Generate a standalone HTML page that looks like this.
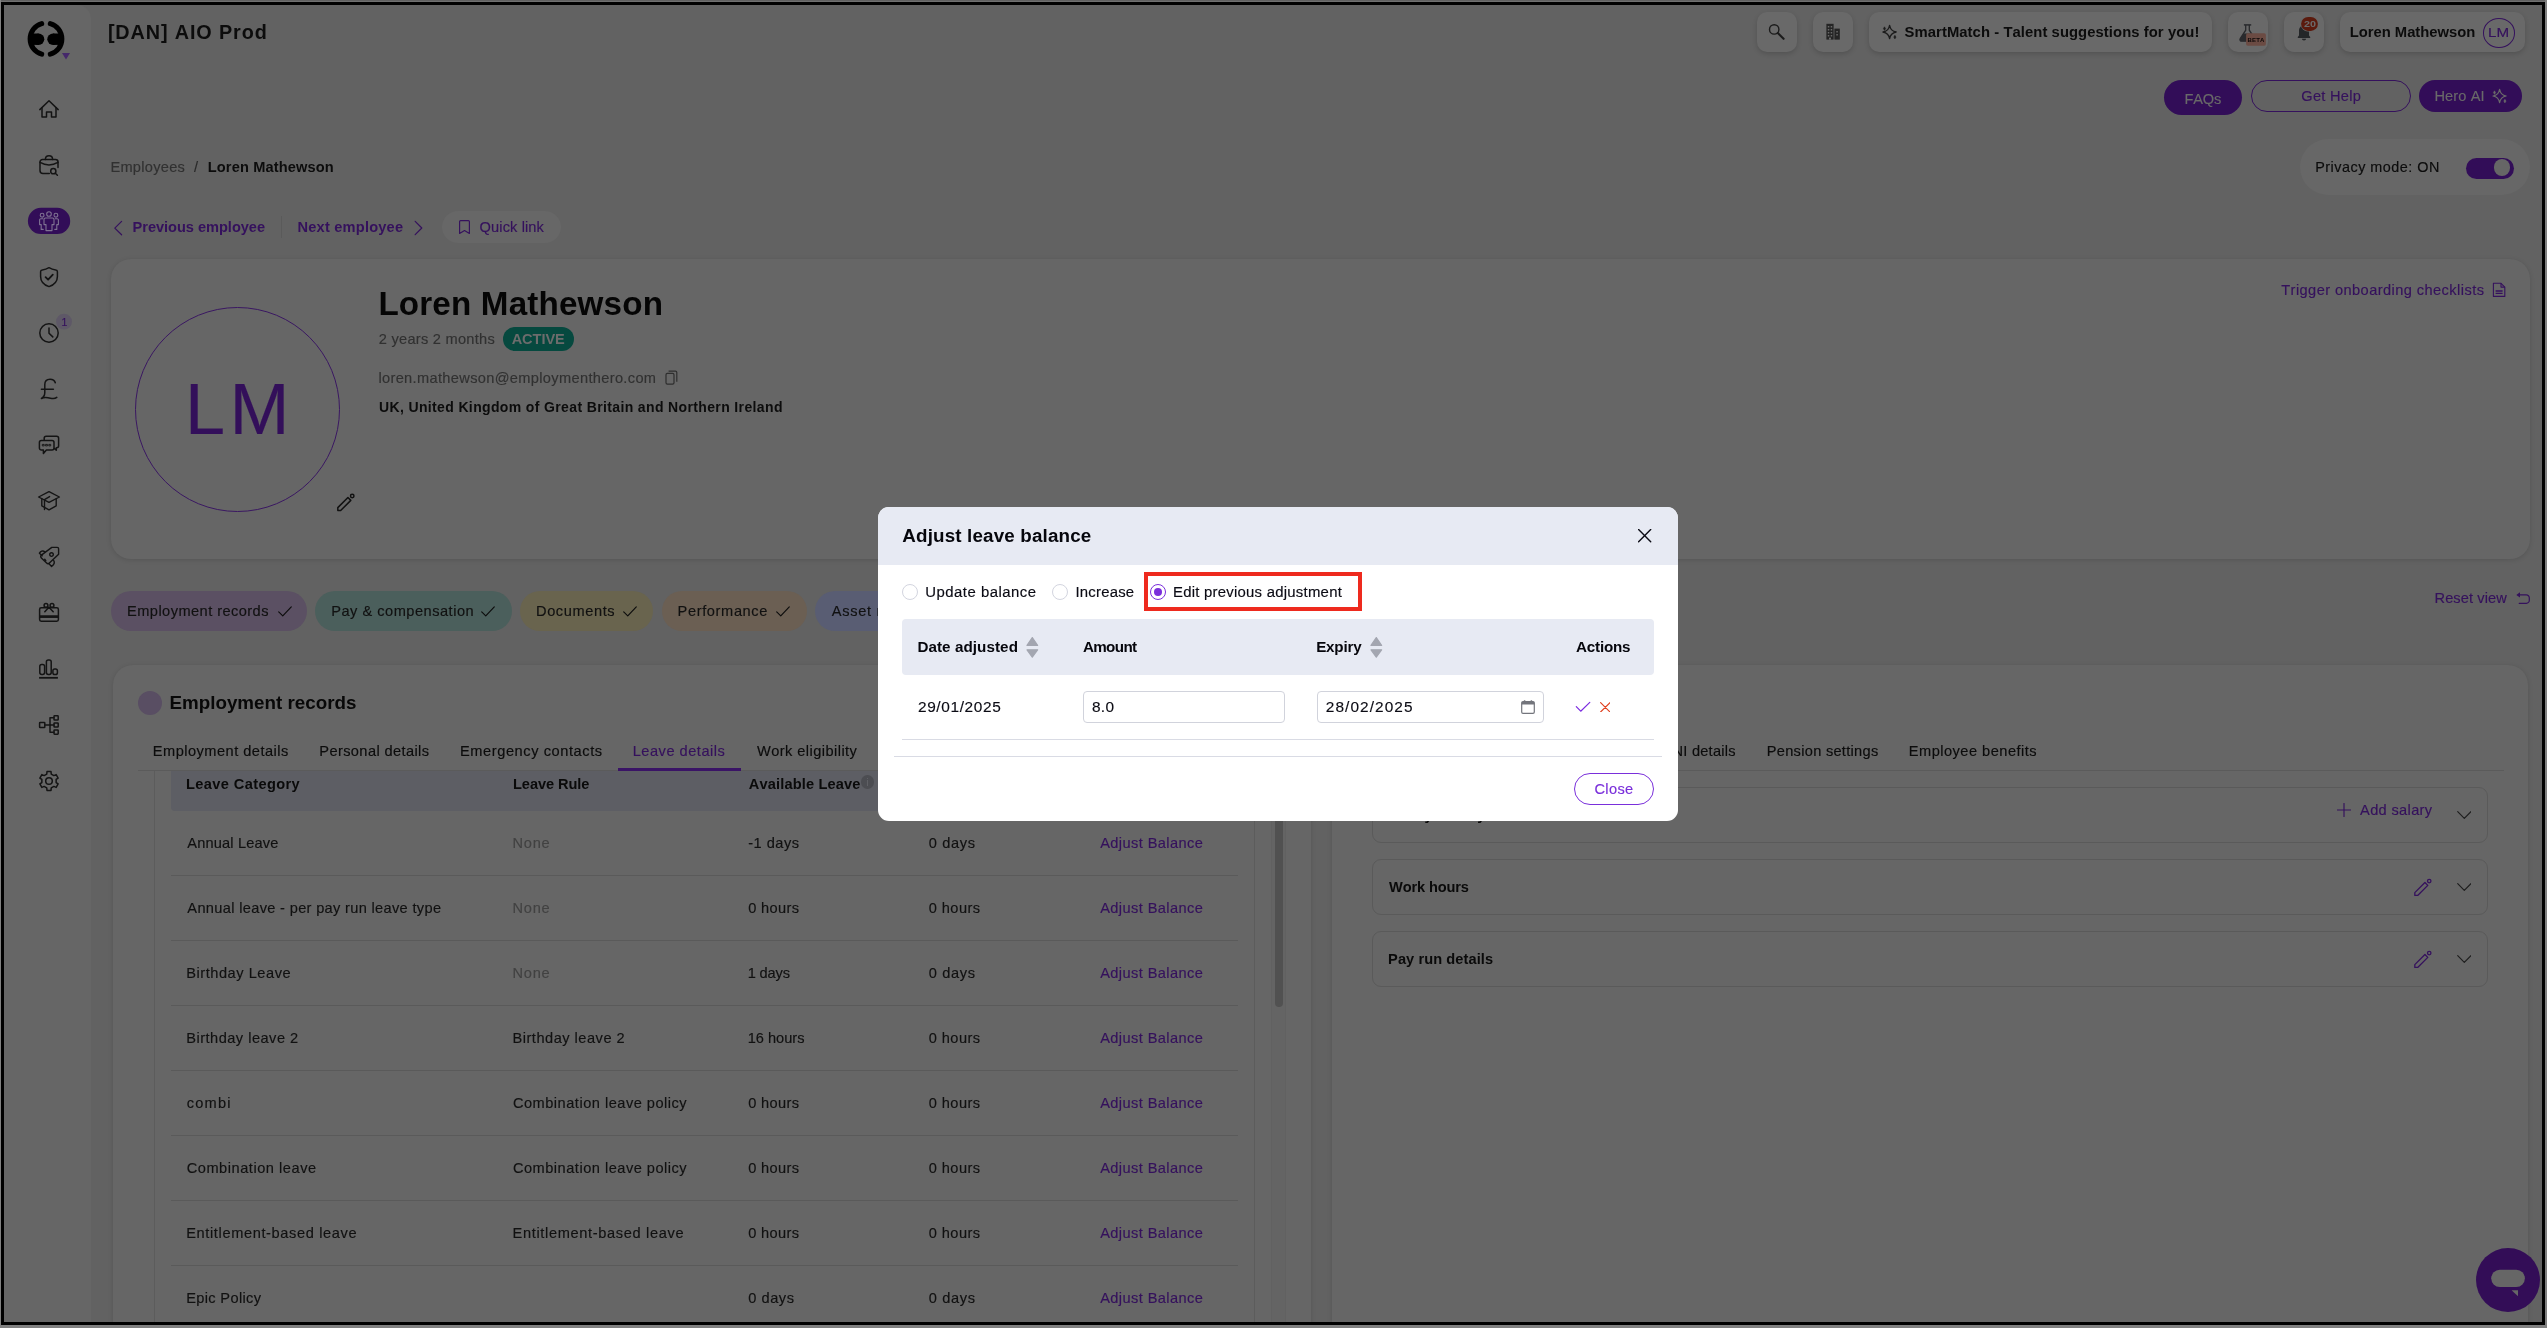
<!DOCTYPE html>
<html lang="en"><head><meta charset="utf-8"><title>Adjust leave balance</title>
<style>
html,body{margin:0;padding:0;}
body{width:2547px;height:1328px;overflow:hidden;background:#707070;font-family:"Liberation Sans",sans-serif;position:relative;}
.a{position:absolute;display:block;box-sizing:border-box;}
.t{position:absolute;white-space:nowrap;line-height:1;font-kerning:none;-webkit-text-stroke:0.15px currentColor;}
.b{-webkit-text-stroke:0;}
#page{will-change:transform;position:absolute;left:4px;top:5px;width:2538px;height:1317px;overflow:hidden;background:#626262;}
#page>.in{position:absolute;left:-4px;top:-5px;width:2547px;height:1328px;}
#frame{position:absolute;left:1px;top:2px;width:2538px;height:1317px;border:3px solid #000;}
</style></head><body>
<div id="page"><div class="in">
<div class="a" style="left:4px;top:5px;width:87px;height:1317px;background:#666666;border-radius:0 14px 0 0;"></div>
<svg class="a" style="left:20px;top:15px;" width="60" height="50" viewBox="20 15 60 50" fill="none"><g stroke="#000" stroke-width="5" stroke-linecap="round" fill="none">
<path d="M41.7 23.6A15.9 15.9 0 0 0 41.7 54.2"/><path d="M50.3 23.6A15.9 15.9 0 0 1 50.3 54.2"/></g>
<g fill="#000"><circle cx="38.6" cy="39.2" r="5.7"/><rect x="30" y="33.5" width="8.6" height="11.4"/>
<circle cx="53" cy="39.2" r="5.7"/><rect x="53" y="33.5" width="9" height="11.4"/></g>
<path d="M62 53H70L66 59.6Z" fill="#45286b"/></svg>
<svg class="a" style="left:4px;top:60px;" width="87" height="760" viewBox="4 60 87 760" fill="none"><g transform="translate(49,109)" stroke="#141414" stroke-width="1.5" stroke-linecap="round" stroke-linejoin="round" fill="none"><path d="M-9.2,0.6L0,-8.2L9.2,0.6"/><path d="M-7,-1.2V8H-2.5V3H2.5V8H7V-1.2"/></g><g transform="translate(49,165)" stroke="#141414" stroke-width="1.5" stroke-linecap="round" stroke-linejoin="round" fill="none"><path d="M0.3,8.6H-6a3,3 0 0 1 -3,-3V-3a2.5,2.5 0 0 1 2.5,-2.5H6.5a2.5,2.5 0 0 1 2.5,2.5V2.6"/><path d="M-3.6,-5.6C-3.6,-10.4 3.6,-10.4 3.6,-5.6"/><path d="M-9,-2.6Q0,2.4 9,-2.6"/><circle cx="4.3" cy="6.2" r="2.6"/><path d="M6.3,8.2L8.4,10.2"/></g><rect x="27.9" y="207.8" width="42.3" height="26.2" rx="13.1" fill="#320d58"/><g transform="translate(49,221)" stroke="#7f7292" stroke-width="1.1" stroke-linecap="round" stroke-linejoin="round" fill="none"><circle cx="0" cy="-7" r="2.3"/><path d="M-3.4,-3H3.4a1.6,1.6 0 0 1 1.6,1.6V3.6H3V9.6H-3V3.6H-5V-1.4a1.6,1.6 0 0 1 1.6,-1.6Z"/><circle cx="-6.9" cy="-5.8" r="1.9"/><circle cx="6.9" cy="-5.8" r="1.9"/><path d="M-6.2,-2.2H-8.2a1.2,1.2 0 0 0 -1.2,1.2V3.6h1.6V8.4h2"/><path d="M6.2,-2.2H8.2a1.2,1.2 0 0 1 1.2,1.2V3.6h-1.6V8.4h-2"/></g><g transform="translate(49,277)" stroke="#141414" stroke-width="1.5" stroke-linecap="round" stroke-linejoin="round" fill="none"><path d="M0,-9.3C-2.2,-8 -4.6,-7.3 -6.8,-7C-7.8,-6.9 -8.4,-6.3 -8.4,-5.3V-0.6C-8.4,4.6 -4.6,8 0,9.6C4.6,8 8.4,4.6 8.4,-0.6V-5.3C8.4,-6.3 7.8,-6.9 6.8,-7C4.6,-7.3 2.2,-8 0,-9.3Z"/><path d="M-3.4,0.2L-0.9,2.7L3.8,-2.3" stroke-width="1.8"/></g><g transform="translate(49,333)" stroke="#141414" stroke-width="1.5" stroke-linecap="round" stroke-linejoin="round" fill="none"><circle cx="0" cy="0" r="9.2"/><path d="M0,-5V0.3L3.8,3.9"/></g><circle cx="64" cy="321.7" r="7.9" fill="#5e5867"/><g transform="translate(49,389)" stroke="#141414" stroke-width="1.5" stroke-linecap="round" stroke-linejoin="round" fill="none"><path d="M6.3,-6.3C5.6,-8.8 3.4,-9.8 1,-9.8C-2.4,-9.8 -4.2,-7.6 -4.2,-4.4V3.6C-4.2,6.6 -5.4,8.3 -7.6,9.5C-4.2,7.6 -1.4,8.4 1.4,9.2C3.8,9.9 6,9.8 7.8,8.4"/><path d="M-7.6,0.2H4.4"/></g><g transform="translate(49,445)" stroke="#141414" stroke-width="1.5" stroke-linecap="round" stroke-linejoin="round" fill="none"><path d="M-4.8,-5V-6.8a2,2 0 0 1 2,-2H7.6a2,2 0 0 1 2,2V0.8a2,2 0 0 1 -2,2H7.3V5.2L5.6,3.6"/><path d="M-7.6,-4.6H3a2,2 0 0 1 2,2V3a2,2 0 0 1 -2,2H-2.6L-5.6,8.4V5H-7.6a2,2 0 0 1 -2,-2V-2.6a2,2 0 0 1 2,-2Z"/><rect x="-6.3" y="-0.6" width="1.5" height="1.5" stroke-width="0.9"/><rect x="-3.05" y="-0.6" width="1.5" height="1.5" stroke-width="0.9"/><rect x="0.2" y="-0.6" width="1.5" height="1.5" stroke-width="0.9"/></g><g transform="translate(49,501)" stroke="#141414" stroke-width="1.4" stroke-linecap="round" stroke-linejoin="round" fill="none"><path d="M0,-9.4L10.4,-4L0,1.4L-10.4,-4Z"/><path d="M-7.2,-2.2V4.8L0,8.8L7.2,4.8V-2.2"/><path d="M0.6,-4.4L-4.5,-1.4V8.6"/></g><g transform="translate(49,557)" stroke="#141414" stroke-width="1.4" stroke-linecap="round" stroke-linejoin="round" fill="none"><path d="M2.8,-9.6H8.2Q9.6,-9.6 9.6,-8.2V-2.8L0.4,6Q-1,7.4 -2.4,6L-7.6,0.9Q-9,-0.5 -7.6,-1.9Z"/><path d="M-4.2,-5.3C-6.4,-6.9 -8.4,-5.6 -9.6,-3.8L-6.8,-1.3"/><path d="M4.6,3.4C6.2,5.6 4.8,7.8 2.6,9.5L0,6.7"/><path d="M-4.3,2.3L-3.2,3.7"/><circle cx="2.5" cy="-2.4" r="1.8"/></g><g transform="translate(49,613)" stroke="#141414" stroke-width="1.5" stroke-linecap="round" stroke-linejoin="round" fill="none"><rect x="-9.4" y="-5.2" width="18.8" height="13.4" rx="1.6"/><path d="M-9.4,3.6H9.4" stroke-width="2.7" stroke-linecap="butt"/><circle cx="-3" cy="-7.6" r="1.9"/><circle cx="3" cy="-7.6" r="1.9"/><path d="M-0.1,-5.8L-4.2,-1.2M-0.1,-5.8L4.2,-1.2"/></g><g transform="translate(49,669)" stroke="#141414" stroke-width="1.5" stroke-linecap="round" stroke-linejoin="round" fill="none"><rect x="-9.2" y="-4.6" width="4.8" height="10.1" rx="1.9"/><rect x="-2.6" y="-9.1" width="4.8" height="14.6" rx="1.9"/><rect x="3.9" y="0" width="4.5" height="5.5" rx="1.8"/><path d="M-9.9,8.8H8.9" stroke-width="1.8" stroke-linecap="butt"/></g><g transform="translate(49,725)" stroke="#141414" stroke-width="1.5" stroke-linecap="round" stroke-linejoin="round" fill="none"><rect x="-9.4" y="-2.6" width="5.2" height="5.2" rx="0.6"/><path d="M-4.2,0H5M1,-7.2V7.2M1,-7.2H5M1,7.2H5"/><rect x="5" y="-9.2" width="4.2" height="4.2" rx="0.6"/><rect x="5" y="-2.1" width="4.2" height="4.2" rx="0.6"/><rect x="5" y="5" width="4.2" height="4.2" rx="0.6"/></g><g transform="translate(49,781)" stroke="#141414" stroke-width="1.5" stroke-linecap="round" stroke-linejoin="round" fill="none"><path d="M4.88,-5.42 L7.13,-6.42 L9.13,-2.97 L7.14,-1.52 L7.14,1.52 L9.13,2.97 L7.13,6.42 L4.88,5.42 L2.26,6.94 L2.00,9.39 L-2.00,9.39 L-2.26,6.94 L-4.88,5.42 L-7.13,6.42 L-9.13,2.97 L-7.14,1.52 L-7.14,-1.52 L-9.13,-2.97 L-7.13,-6.42 L-4.88,-5.42 L-2.26,-6.94 L-2.00,-9.39 L2.00,-9.39 L2.26,-6.94Z"/><circle cx="0" cy="0" r="3.3"/></g></svg><span class="t" style="left:61.60px;top:317.00px;font-size:10.5px;color:#35115d;">1</span>
<span class="t b" style="left:107.89px;top:23.00px;font-size:19.8px;color:#0c0c0c;letter-spacing:0.895px;font-weight:700;">[DAN] AIO Prod</span>
<div class="a" style="left:1757px;top:12px;width:40px;height:40px;background:#696969;border-radius:10px;box-shadow:0 2px 5px rgba(0,0,0,.16);"></div>
<div class="a" style="left:1813px;top:12px;width:40px;height:40px;background:#696969;border-radius:10px;box-shadow:0 2px 5px rgba(0,0,0,.16);"></div>
<div class="a" style="left:1869px;top:12px;width:343px;height:40px;background:#696969;border-radius:10px;box-shadow:0 2px 5px rgba(0,0,0,.16);"></div>
<div class="a" style="left:2228px;top:12px;width:40px;height:40px;background:#696969;border-radius:10px;box-shadow:0 2px 5px rgba(0,0,0,.16);"></div>
<div class="a" style="left:2284px;top:12px;width:40px;height:40px;background:#696969;border-radius:10px;box-shadow:0 2px 5px rgba(0,0,0,.16);"></div>
<div class="a" style="left:2340px;top:12px;width:185px;height:40px;background:#696969;border-radius:10px;box-shadow:0 2px 5px rgba(0,0,0,.16);"></div>
<svg class="a" style="left:1750px;top:8px;" width="790" height="112" viewBox="1750 8 790 112" fill="none"><g stroke="#1b1b1b" fill="none"><circle cx="1774.2" cy="29.4" r="4.7" stroke-width="1.4"/><path d="M1777.8,33L1783.6,38.8" stroke-width="2.1" stroke-linecap="round"/></g><g fill="#242424"><rect x="1826.4" y="23.8" width="7.2" height="15.8"/><rect x="1834.4" y="28.6" width="5.4" height="11"/></g><g fill="#696969"><rect x="1827.8" y="26" width="1.5" height="1.5"/><rect x="1827.8" y="29" width="1.5" height="1.5"/><rect x="1827.8" y="32" width="1.5" height="1.5"/><rect x="1827.8" y="35" width="1.5" height="1.5"/><rect x="1830.7" y="26" width="1.5" height="1.5"/><rect x="1830.7" y="29" width="1.5" height="1.5"/><rect x="1830.7" y="32" width="1.5" height="1.5"/><rect x="1830.7" y="35" width="1.5" height="1.5"/><rect x="1836.3" y="31" width="1.5" height="1.5"/><rect x="1836.3" y="34" width="1.5" height="1.5"/><rect x="1829" y="37.6" width="2" height="2"/></g><g transform="translate(1889.6,32) scale(1.0)"><path d="M0,-6.7C0.7,-2.5 2.3,-0.8 6.6,0C2.3,0.8 0.7,2.5 0,6.7C-0.7,2.5 -2.3,0.8 -6.6,0C-2.3,-0.8 -0.7,-2.5 0,-6.7Z" stroke="#1b1b1b" stroke-width="1.3" stroke-linejoin="round" fill="none"/><path d="M-5.1,-5.2L-4,-3.4L-5.1,-1.6L-6.2,-3.4Z M5.3,3.3L6.4,5.1L5.3,6.9L4.2,5.1Z" fill="#1b1b1b" stroke="#1b1b1b" stroke-width="0.5" stroke-linejoin="round"/></g><path d="M2243.9,24.9H2251.2" stroke="#292a2d" stroke-width="1.5"/><path d="M2245.7,25V30.2L2240.2,38.6A1.7,1.7 0 0 0 2241.7,41.2H2253.3A1.7,1.7 0 0 0 2254.8,38.6L2249.3,30.2V25" stroke="#292a2d" stroke-width="1.3" fill="none"/><path d="M2243.4,33.6H2251.6L2254.8,38.6A1.7,1.7 0 0 1 2253.3,41.2H2241.7A1.7,1.7 0 0 1 2240.2,38.6Z" fill="#292a2d"/><rect x="2246.1" y="33.3" width="19.8" height="12.4" rx="1.6" fill="#6b4b43"/><path d="M2304,25.5C2300.4,25.5 2299,28.2 2299,31.2V35.4L2297.8,37V38H2310.2V37L2309,35.4V31.2C2309,28.2 2307.6,25.5 2304,25.5Z" fill="#242628"/><path d="M2301.9,38.8H2306.1A2.1,1.7 0 0 1 2301.9,38.8Z" fill="#242628"/><rect x="2300.6" y="16.4" width="17.8" height="15" rx="7.5" fill="#6a6a6a"/><rect x="2301.1" y="16.9" width="16.8" height="14" rx="7" fill="#5b1a0d"/></svg><span class="t b" style="left:2247.60px;top:37.00px;font-size:6px;color:#0c0808;letter-spacing:0.142px;font-weight:700;">BETA</span><span class="t b" style="left:2303.53px;top:20.00px;font-size:9.3px;color:#6b6b6b;font-weight:700;transform:scaleX(1.1618);transform-origin:0 0;">20</span>
<span class="t b" style="left:1904.57px;top:25.00px;font-size:14.8px;color:#0c0c0c;letter-spacing:0.075px;font-weight:700;">SmartMatch - Talent suggestions for you!</span>
<span class="t b" style="left:2349.71px;top:25.00px;font-size:14.8px;color:#0c0c0c;letter-spacing:-0.014px;font-weight:700;">Loren Mathewson</span>
<div class="a" style="left:2483px;top:18.2px;width:32px;height:29.6px;border-radius:50%;border:1px solid #35115d;"></div>
<span class="t" style="left:2488.25px;top:27.00px;font-size:12.6px;color:#35115d;transform:scaleX(1.2050);transform-origin:0 0;">LM</span>
<div class="a" style="left:2164px;top:80px;width:78px;height:35px;background:#320d58;border-radius:17.5px;"></div>
<span class="t" style="left:2184.40px;top:92.00px;font-size:14.6px;color:#696969;letter-spacing:-0.163px;">FAQs</span>
<div class="a" style="left:2251px;top:80px;width:160px;height:32px;border-radius:16px;border:1px solid #35115d;"></div>
<span class="t" style="left:2301.27px;top:89.00px;font-size:14.6px;color:#35115d;letter-spacing:0.276px;">Get Help</span>
<div class="a" style="left:2419px;top:80px;width:103px;height:32px;background:#320d58;border-radius:16px;"></div>
<span class="t" style="left:2434.40px;top:89.00px;font-size:14.6px;color:#696969;letter-spacing:0.125px;">Hero AI</span>
<svg class="a" style="left:2490px;top:86px;" width="20" height="20" viewBox="2490 86 20 20" fill="none"><g transform="translate(2499.6,96) scale(1.0)"><path d="M0,-6.7C0.7,-2.5 2.3,-0.8 6.6,0C2.3,0.8 0.7,2.5 0,6.7C-0.7,2.5 -2.3,0.8 -6.6,0C-2.3,-0.8 -0.7,-2.5 0,-6.7Z" stroke="#6a6a6a" stroke-width="1.2" stroke-linejoin="round" fill="none"/><path d="M-5.1,-5.2L-4,-3.4L-5.1,-1.6L-6.2,-3.4Z M5.3,3.3L6.4,5.1L5.3,6.9L4.2,5.1Z" fill="#6a6a6a" stroke="#6a6a6a" stroke-width="0.5" stroke-linejoin="round"/></g></svg>
<div class="a" style="left:2300px;top:139px;width:230px;height:56px;background:#676767;border-radius:28px;"></div>
<span class="t" style="left:2315.22px;top:160.00px;font-size:14.4px;color:#0c0c0c;letter-spacing:0.495px;">Privacy mode: ON</span>
<div class="a" style="left:2466px;top:157.6px;width:48.2px;height:21.4px;background:#320d58;border-radius:10.7px;"></div>
<div class="a" style="left:2493.9px;top:159.2px;width:16.4px;height:16.4px;background:#666666;border-radius:8.2px;"></div>
<span class="t" style="left:110.40px;top:160.00px;font-size:14.6px;color:#313131;letter-spacing:0.288px;">Employees</span>
<span class="t" style="left:194.00px;top:160.00px;font-size:14.6px;color:#2a2a2a;">/</span>
<span class="t b" style="left:207.72px;top:160.00px;font-size:14.6px;color:#0c0c0c;letter-spacing:0.141px;font-weight:700;">Loren Mathewson</span>
<span class="t b" style="left:132.62px;top:220.00px;font-size:14.6px;color:#35115d;letter-spacing:-0.038px;font-weight:700;">Previous employee</span>
<div class="a" style="left:281px;top:216px;width:1px;height:22px;background:#5a5a5a;"></div>
<span class="t b" style="left:297.52px;top:220.00px;font-size:14.6px;color:#35115d;letter-spacing:0.210px;font-weight:700;">Next employee</span>
<div class="a" style="left:442px;top:211px;width:118.8px;height:32.2px;background:#676767;border-radius:16.1px;"></div>
<span class="t" style="left:479.61px;top:220.00px;font-size:14.6px;color:#35115d;letter-spacing:0.110px;">Quick link</span>
<svg class="a" style="left:110px;top:215px;" width="370" height="26" viewBox="110 215 370 26" fill="none"><g stroke="#35115d" stroke-width="1.2" stroke-linecap="round" stroke-linejoin="round" fill="none"><path d="M121.6,221.4L114.8,228.1L121.6,234.8"/><path d="M415.2,221.3L421.8,228L415.2,234.7"/><path d="M460.6,220.6H468.4Q469.4,220.6 469.4,221.6V233.5L464.5,230.6L459.6,233.5V221.6Q459.6,220.6 460.6,220.6Z" stroke-width="1.15"/></g></svg>
<div class="a" style="left:111px;top:259px;width:2419px;height:300.3px;background:#666666;border-radius:20px;box-shadow:0 1px 5px rgba(0,0,0,.13);"></div>
<div class="a" style="left:134.5px;top:306.5px;width:205px;height:205px;border-radius:50%;border:1px solid #3a1762;"></div>
<span class="t" style="left:185.09px;top:373.00px;font-size:72px;color:#330f5a;letter-spacing:4.493px;">LM</span>
<span class="t b" style="left:378.38px;top:287.00px;font-size:33.2px;color:#050505;letter-spacing:0.176px;font-weight:700;">Loren Mathewson</span>
<span class="t" style="left:378.77px;top:332.00px;font-size:14.6px;color:#313131;letter-spacing:0.265px;">2 years 2 months</span>
<div class="a" style="left:503px;top:327px;width:71px;height:24px;background:#06493f;border-radius:12px;"></div>
<span class="t b" style="left:511.64px;top:332.00px;font-size:14.6px;color:#6c6c6c;letter-spacing:-0.061px;font-weight:700;">ACTIVE</span>
<span class="t" style="left:378.42px;top:371.00px;font-size:14.6px;color:#313131;letter-spacing:0.344px;">loren.mathewson@employmenthero.com</span>
<span class="t b" style="left:378.96px;top:400.00px;font-size:14px;color:#0c0c0c;letter-spacing:0.364px;font-weight:700;">UK, United Kingdom of Great Britain and Northern Ireland</span>
<span class="t" style="left:2281.27px;top:283.00px;font-size:14.6px;color:#35115d;letter-spacing:0.430px;">Trigger onboarding checklists</span>
<svg class="a" style="left:336.5px;top:493.4px;" width="18.4" height="18.4" viewBox="0 0 18 18" fill="none"><g stroke="#111" stroke-width="1.4673913043478262" stroke-linecap="round" stroke-linejoin="round" fill="none"><path d="M0.8,17.1V14.3L10.7,4.4L13.5,7.2L3.6,17.1Z"/><circle cx="14.9" cy="3" r="1.7"/></g></svg><svg class="a" style="left:664px;top:369px;" width="16" height="18" viewBox="664 369 16 18" fill="none"><g stroke="#2e2e2e" stroke-width="1.2" fill="none" stroke-linejoin="round"><rect x="666" y="373.4" width="8" height="10.8" rx="1.4"/><path d="M668.6,371.2H675.4a1.4,1.4 0 0 1 1.4,1.4V381.8"/></g></svg><svg class="a" style="left:2490px;top:280px;" width="18" height="20" viewBox="2490 280 18 20" fill="none"><g stroke="#35115d" stroke-width="1.1" fill="none" stroke-linejoin="round"><path d="M2493.4,283.3H2501L2504.8,287.1V296.4H2493.4Z"/><path d="M2501,283.3V287.1H2504.8"/><path d="M2495.6,291H2502.6M2495.6,293.4H2502.6" stroke-width="1.3"/></g></svg>
<div class="a" style="left:111px;top:591px;width:196px;height:40px;background:#5b5063;border-radius:20px;"></div>
<span class="t" style="left:127.10px;top:604.00px;font-size:14.6px;color:#111111;letter-spacing:0.444px;">Employment records</span>
<svg class="a" style="left:277.5px;top:606px;" width="14" height="10.64" viewBox="0 0 14 10.64" fill="none"><path d="M0.7,5.96L4.76,9.84L13.30,0.8" stroke="#0c0c0c" stroke-width="1.15" stroke-linecap="round" stroke-linejoin="round"/></svg>
<div class="a" style="left:315px;top:591px;width:197px;height:40px;background:#4b5f5c;border-radius:20px;"></div>
<span class="t" style="left:331.20px;top:604.00px;font-size:14.6px;color:#111111;letter-spacing:0.508px;">Pay &amp; compensation</span>
<svg class="a" style="left:481.3px;top:606px;" width="14" height="10.64" viewBox="0 0 14 10.64" fill="none"><path d="M0.7,5.96L4.76,9.84L13.30,0.8" stroke="#0c0c0c" stroke-width="1.15" stroke-linecap="round" stroke-linejoin="round"/></svg>
<div class="a" style="left:520.2px;top:591px;width:133.2px;height:40px;background:#69644e;border-radius:20px;"></div>
<span class="t" style="left:536.00px;top:604.00px;font-size:14.6px;color:#111111;letter-spacing:0.598px;">Documents</span>
<svg class="a" style="left:622.5px;top:606px;" width="14" height="10.64" viewBox="0 0 14 10.64" fill="none"><path d="M0.7,5.96L4.76,9.84L13.30,0.8" stroke="#0c0c0c" stroke-width="1.15" stroke-linecap="round" stroke-linejoin="round"/></svg>
<div class="a" style="left:662.2px;top:591px;width:144.5px;height:40px;background:#6b5f53;border-radius:20px;"></div>
<span class="t" style="left:677.60px;top:604.00px;font-size:14.6px;color:#111111;letter-spacing:0.627px;">Performance</span>
<svg class="a" style="left:775.5px;top:606px;" width="14" height="10.64" viewBox="0 0 14 10.64" fill="none"><path d="M0.7,5.96L4.76,9.84L13.30,0.8" stroke="#0c0c0c" stroke-width="1.15" stroke-linecap="round" stroke-linejoin="round"/></svg>
<div class="a" style="left:815px;top:591px;width:195px;height:40px;background:#595d73;border-radius:20px;"></div>
<span class="t" style="left:831.77px;top:604.00px;font-size:14.6px;color:#111111;letter-spacing:0.709px;">Asset register</span>
<svg class="a" style="left:940px;top:606px;" width="14" height="10.64" viewBox="0 0 14 10.64" fill="none"><path d="M0.7,5.96L4.76,9.84L13.30,0.8" stroke="#0c0c0c" stroke-width="1.15" stroke-linecap="round" stroke-linejoin="round"/></svg>
<span class="t" style="left:2434.50px;top:591.00px;font-size:14.6px;color:#35115d;letter-spacing:0.095px;">Reset view</span>
<svg class="a" style="left:2514px;top:589px;" width="20" height="18" viewBox="2514 589 20 18" fill="none"><path d="M2518.6,594.9H2526.4A2.9,2.9 0 0 1 2529.3,597.8V600.4A2.9,2.9 0 0 1 2526.4,603.3H2519.2" stroke="#35115d" stroke-width="1.2" stroke-linecap="round" fill="none"/><path d="M2516.3,594.9L2520,592.2V597.6Z" fill="#35115d"/></svg>
<div class="a" style="left:113px;top:665px;width:1197.5px;height:735px;background:#666666;border-radius:20px;box-shadow:0 1px 5px rgba(0,0,0,.13);"></div>
<div class="a" style="left:137.9px;top:691px;width:24.1px;height:24px;background:#594e63;border-radius:12px;"></div>
<span class="t b" style="left:169.54px;top:694.00px;font-size:18.8px;color:#080808;font-weight:700;">Employment records</span>
<span class="t" style="left:152.80px;top:744.00px;font-size:14.6px;color:#0c0c0c;letter-spacing:0.478px;">Employment details</span>
<span class="t" style="left:319.30px;top:744.00px;font-size:14.6px;color:#0c0c0c;letter-spacing:0.390px;">Personal details</span>
<span class="t" style="left:460.00px;top:744.00px;font-size:14.6px;color:#0c0c0c;letter-spacing:0.580px;">Emergency contacts</span>
<span class="t" style="left:632.70px;top:744.00px;font-size:14.6px;color:#35115d;letter-spacing:0.516px;">Leave details</span>
<span class="t" style="left:756.94px;top:744.00px;font-size:14.6px;color:#0c0c0c;letter-spacing:0.446px;">Work eligibility</span>
<div class="a" style="left:137.8px;top:770px;width:1152.2px;height:1px;background:#5b5b5b;"></div>
<div class="a" style="left:618.2px;top:768px;width:122.5px;height:2.7px;background:#3a1466;"></div>
<div class="a" style="left:154px;top:771px;width:1px;height:559px;background:#5c5c5c;"></div>
<div class="a" style="left:1254px;top:771px;width:1px;height:559px;background:#5c5c5c;"></div>
<div class="a" style="left:1271.4px;top:771px;width:14.3px;height:559px;background:#646464;border-left:1px solid #616161;border-right:1px solid #616161;box-sizing:border-box;"></div>
<div class="a" style="left:1275.4px;top:780px;width:7.8px;height:226.5px;background:#515151;border-radius:4px;"></div>
<div class="a" style="left:171.1px;top:771px;width:1082.9px;height:39.8px;background:#5d5e64;border-radius:0 0 0 4px;"></div>
<span class="t b" style="left:186.02px;top:777.00px;font-size:14.6px;color:#0a0a0a;letter-spacing:0.386px;font-weight:700;">Leave Category</span>
<span class="t b" style="left:513.02px;top:777.00px;font-size:14.6px;color:#0a0a0a;letter-spacing:-0.068px;font-weight:700;">Leave Rule</span>
<span class="t b" style="left:748.84px;top:777.00px;font-size:14.6px;color:#0a0a0a;letter-spacing:0.150px;font-weight:700;">Available Leave</span>
<div class="a" style="left:860.9px;top:775.1px;width:13.6px;height:13.6px;background:#4c4d52;border-radius:7px;"></div>
<div class="a" style="left:867.2px;top:777.6px;width:1px;height:1.4px;background:#5f6065;"></div>
<div class="a" style="left:867.2px;top:780.4px;width:1px;height:5.8px;background:#5f6065;"></div>
<span class="t" style="left:187.37px;top:836.00px;font-size:14.6px;color:#111111;letter-spacing:0.153px;">Annual Leave</span>
<span class="t" style="left:512.50px;top:836.00px;font-size:14.6px;color:#424242;letter-spacing:0.748px;">None</span>
<span class="t" style="left:748.15px;top:836.00px;font-size:14.6px;color:#111111;letter-spacing:0.500px;">-1 days</span>
<span class="t" style="left:928.83px;top:836.00px;font-size:14.6px;color:#111111;letter-spacing:0.636px;">0 days</span>
<span class="t" style="left:1100.17px;top:836.00px;font-size:14.6px;color:#35115d;letter-spacing:0.414px;">Adjust Balance</span>
<div class="a" style="left:171.3px;top:875px;width:1066.4px;height:1px;background:#5a5a5a;"></div>
<span class="t" style="left:187.37px;top:901.00px;font-size:14.6px;color:#111111;letter-spacing:0.331px;">Annual leave - per pay run leave type</span>
<span class="t" style="left:512.50px;top:901.00px;font-size:14.6px;color:#424242;letter-spacing:0.748px;">None</span>
<span class="t" style="left:748.23px;top:901.00px;font-size:14.6px;color:#111111;letter-spacing:0.350px;">0 hours</span>
<span class="t" style="left:928.83px;top:901.00px;font-size:14.6px;color:#111111;letter-spacing:0.417px;">0 hours</span>
<span class="t" style="left:1100.17px;top:901.00px;font-size:14.6px;color:#35115d;letter-spacing:0.414px;">Adjust Balance</span>
<div class="a" style="left:171.3px;top:940px;width:1066.4px;height:1px;background:#5a5a5a;"></div>
<span class="t" style="left:186.20px;top:966.00px;font-size:14.6px;color:#111111;letter-spacing:0.542px;">Birthday Leave</span>
<span class="t" style="left:512.50px;top:966.00px;font-size:14.6px;color:#424242;letter-spacing:0.748px;">None</span>
<span class="t" style="left:747.69px;top:966.00px;font-size:14.6px;color:#111111;letter-spacing:-0.135px;">1 days</span>
<span class="t" style="left:928.83px;top:966.00px;font-size:14.6px;color:#111111;letter-spacing:0.636px;">0 days</span>
<span class="t" style="left:1100.17px;top:966.00px;font-size:14.6px;color:#35115d;letter-spacing:0.414px;">Adjust Balance</span>
<div class="a" style="left:171.3px;top:1005px;width:1066.4px;height:1px;background:#5a5a5a;"></div>
<span class="t" style="left:186.20px;top:1031.00px;font-size:14.6px;color:#111111;letter-spacing:0.489px;">Birthday leave 2</span>
<span class="t" style="left:512.50px;top:1031.00px;font-size:14.6px;color:#111111;letter-spacing:0.502px;">Birthday leave 2</span>
<span class="t" style="left:747.69px;top:1031.00px;font-size:14.6px;color:#111111;">16 hours</span>
<span class="t" style="left:928.83px;top:1031.00px;font-size:14.6px;color:#111111;letter-spacing:0.417px;">0 hours</span>
<span class="t" style="left:1100.17px;top:1031.00px;font-size:14.6px;color:#35115d;letter-spacing:0.414px;">Adjust Balance</span>
<div class="a" style="left:171.3px;top:1070px;width:1066.4px;height:1px;background:#5a5a5a;"></div>
<span class="t" style="left:186.78px;top:1096.00px;font-size:14.6px;color:#111111;letter-spacing:1.190px;">combi</span>
<span class="t" style="left:512.96px;top:1096.00px;font-size:14.6px;color:#111111;letter-spacing:0.498px;">Combination leave policy</span>
<span class="t" style="left:748.23px;top:1096.00px;font-size:14.6px;color:#111111;letter-spacing:0.350px;">0 hours</span>
<span class="t" style="left:928.83px;top:1096.00px;font-size:14.6px;color:#111111;letter-spacing:0.417px;">0 hours</span>
<span class="t" style="left:1100.17px;top:1096.00px;font-size:14.6px;color:#35115d;letter-spacing:0.414px;">Adjust Balance</span>
<div class="a" style="left:171.3px;top:1135px;width:1066.4px;height:1px;background:#5a5a5a;"></div>
<span class="t" style="left:186.66px;top:1161.00px;font-size:14.6px;color:#111111;letter-spacing:0.535px;">Combination leave</span>
<span class="t" style="left:512.96px;top:1161.00px;font-size:14.6px;color:#111111;letter-spacing:0.498px;">Combination leave policy</span>
<span class="t" style="left:748.23px;top:1161.00px;font-size:14.6px;color:#111111;letter-spacing:0.350px;">0 hours</span>
<span class="t" style="left:928.83px;top:1161.00px;font-size:14.6px;color:#111111;letter-spacing:0.417px;">0 hours</span>
<span class="t" style="left:1100.17px;top:1161.00px;font-size:14.6px;color:#35115d;letter-spacing:0.414px;">Adjust Balance</span>
<div class="a" style="left:171.3px;top:1200px;width:1066.4px;height:1px;background:#5a5a5a;"></div>
<span class="t" style="left:186.20px;top:1226.00px;font-size:14.6px;color:#111111;letter-spacing:0.628px;">Entitlement-based leave</span>
<span class="t" style="left:512.50px;top:1226.00px;font-size:14.6px;color:#111111;letter-spacing:0.660px;">Entitlement-based leave</span>
<span class="t" style="left:748.23px;top:1226.00px;font-size:14.6px;color:#111111;letter-spacing:0.350px;">0 hours</span>
<span class="t" style="left:928.83px;top:1226.00px;font-size:14.6px;color:#111111;letter-spacing:0.417px;">0 hours</span>
<span class="t" style="left:1100.17px;top:1226.00px;font-size:14.6px;color:#35115d;letter-spacing:0.414px;">Adjust Balance</span>
<div class="a" style="left:171.3px;top:1265px;width:1066.4px;height:1px;background:#5a5a5a;"></div>
<span class="t" style="left:186.20px;top:1291.00px;font-size:14.6px;color:#111111;letter-spacing:0.342px;">Epic Policy</span>
<span class="t" style="left:748.23px;top:1291.00px;font-size:14.6px;color:#111111;letter-spacing:0.556px;">0 days</span>
<span class="t" style="left:928.83px;top:1291.00px;font-size:14.6px;color:#111111;letter-spacing:0.636px;">0 days</span>
<span class="t" style="left:1100.17px;top:1291.00px;font-size:14.6px;color:#35115d;letter-spacing:0.414px;">Adjust Balance</span>
<div class="a" style="left:1332px;top:665px;width:1196px;height:735px;background:#666666;border-radius:20px;box-shadow:0 1px 5px rgba(0,0,0,.13);"></div>
<div class="a" style="left:1355.8px;top:691px;width:24px;height:24px;background:#4b5f5c;border-radius:12px;"></div>
<span class="t b" style="left:1386.44px;top:694.00px;font-size:18.8px;color:#080808;letter-spacing:-0.011px;font-weight:700;">Pay &amp; compensation</span>
<span class="t" style="left:1371.34px;top:744.00px;font-size:14.6px;color:#0c0c0c;letter-spacing:0.662px;">Salary</span>
<span class="t" style="left:1446.80px;top:744.00px;font-size:14.6px;color:#0c0c0c;letter-spacing:0.653px;">Bank details</span>
<span class="t" style="left:1625.67px;top:744.00px;font-size:14.6px;color:#0c0c0c;letter-spacing:0.106px;">Tax &amp;</span>
<span class="t" style="left:1672.60px;top:744.00px;font-size:14.6px;color:#0c0c0c;letter-spacing:0.230px;">NI details</span>
<span class="t" style="left:1766.80px;top:744.00px;font-size:14.6px;color:#0c0c0c;letter-spacing:0.286px;">Pension settings</span>
<span class="t" style="left:1908.80px;top:744.00px;font-size:14.6px;color:#0c0c0c;letter-spacing:0.482px;">Employee benefits</span>
<div class="a" style="left:1355.8px;top:770px;width:1148.2px;height:1px;background:#5b5b5b;"></div>
<div class="a" style="left:1372px;top:787px;width:1116px;height:56px;border-radius:9px;border:1px solid #5a5a5a;box-sizing:border-box;"></div>
<span class="t b" style="left:1388.68px;top:808.00px;font-size:14.6px;color:#0a0a0a;letter-spacing:0.010px;font-weight:700;">Salary history</span>
<svg class="a" style="left:2456.8px;top:810.8px;" width="14.6" height="8.2" viewBox="0 0 14.6 8.2" fill="none"><path d="M0.7,0.7L7.3,7.4L13.9,0.7" stroke="#1e1e1e" stroke-width="1.15" stroke-linecap="round" stroke-linejoin="round"/></svg>
<div class="a" style="left:1372px;top:859px;width:1116px;height:56px;border-radius:9px;border:1px solid #5a5a5a;box-sizing:border-box;"></div>
<span class="t b" style="left:1389.09px;top:880.00px;font-size:14.6px;color:#0a0a0a;letter-spacing:-0.133px;font-weight:700;">Work hours</span>
<svg class="a" style="left:2456.8px;top:882.8px;" width="14.6" height="8.2" viewBox="0 0 14.6 8.2" fill="none"><path d="M0.7,0.7L7.3,7.4L13.9,0.7" stroke="#1e1e1e" stroke-width="1.15" stroke-linecap="round" stroke-linejoin="round"/></svg>
<svg class="a" style="left:2414px;top:877.8px;" width="18.4" height="18.4" viewBox="0 0 18 18" fill="none"><g stroke="#35115d" stroke-width="1.2717391304347827" stroke-linecap="round" stroke-linejoin="round" fill="none"><path d="M0.8,17.1V14.3L10.7,4.4L13.5,7.2L3.6,17.1Z"/><circle cx="14.9" cy="3" r="1.7"/></g></svg>
<div class="a" style="left:1372px;top:931px;width:1116px;height:56px;border-radius:9px;border:1px solid #5a5a5a;box-sizing:border-box;"></div>
<span class="t b" style="left:1388.12px;top:952.00px;font-size:14.6px;color:#0a0a0a;letter-spacing:0.080px;font-weight:700;">Pay run details</span>
<svg class="a" style="left:2456.8px;top:954.8px;" width="14.6" height="8.2" viewBox="0 0 14.6 8.2" fill="none"><path d="M0.7,0.7L7.3,7.4L13.9,0.7" stroke="#1e1e1e" stroke-width="1.15" stroke-linecap="round" stroke-linejoin="round"/></svg>
<svg class="a" style="left:2414px;top:949.8px;" width="18.4" height="18.4" viewBox="0 0 18 18" fill="none"><g stroke="#35115d" stroke-width="1.2717391304347827" stroke-linecap="round" stroke-linejoin="round" fill="none"><path d="M0.8,17.1V14.3L10.7,4.4L13.5,7.2L3.6,17.1Z"/><circle cx="14.9" cy="3" r="1.7"/></g></svg>
<svg class="a" style="left:2337.4px;top:803px;" width="14" height="14" viewBox="0 0 14 14" fill="none"><path d="M7,0.4V13.6M0.4,7H13.6" stroke="#35115d" stroke-width="1.15" stroke-linecap="round"/></svg>
<span class="t" style="left:2360.07px;top:803.00px;font-size:14.6px;color:#35115d;letter-spacing:0.342px;">Add salary</span>
<svg class="a" style="left:2470px;top:1242px;" width="76" height="76" viewBox="2470 1242 76 76" fill="none"><circle cx="2508" cy="1280" r="32" fill="#330d57"/><rect x="2491.2" y="1269.8" width="33.7" height="17.1" rx="8.55" fill="#666666"/><path d="M2511.6,1290.2H2518V1296.2Z" fill="#666666"/></svg>
<div class="a" style="left:878px;top:506.7px;width:800px;height:313.9px;background:#ffffff;border-radius:11px;overflow:hidden;"><div class="a" style="left:0;top:0;width:800px;height:58px;background:#e7eaf3"></div></div>
<span class="t b" style="left:902.33px;top:527.00px;font-size:18.8px;color:#06060c;letter-spacing:0.164px;font-weight:700;">Adjust leave balance</span>
<svg class="a" style="left:1638.3px;top:529.4px;" width="13.3" height="13.3" viewBox="0 0 13.3 13.3" fill="none"><path d="M0.6,0.6L12.700000000000001,12.700000000000001M12.700000000000001,0.6L0.6,12.700000000000001" stroke="#0b0b14" stroke-width="1.4" stroke-linecap="round"/></svg>
<div class="a" style="left:902px;top:583.8px;width:16px;height:16px;background:#fff;border-radius:8px;border:1px solid #d3d5df;box-sizing:border-box;"></div>
<span class="t" style="left:925.25px;top:585.00px;font-size:14.9px;color:#0b0b14;letter-spacing:0.502px;">Update balance</span>
<div class="a" style="left:1051.9px;top:583.8px;width:16px;height:16px;background:#fff;border-radius:8px;border:1px solid #d3d5df;box-sizing:border-box;"></div>
<span class="t" style="left:1075.42px;top:585.00px;font-size:14.9px;color:#0b0b14;letter-spacing:0.227px;">Increase</span>
<div class="a" style="left:1150px;top:583.8px;width:16px;height:16px;background:#fff;border-radius:8px;border:1px solid #7a2fdb;box-sizing:border-box;"></div>
<div class="a" style="left:1154px;top:587.8px;width:8px;height:8px;background:#7a2fdb;border-radius:4px;"></div>
<span class="t" style="left:1172.98px;top:585.00px;font-size:14.9px;color:#0b0b14;letter-spacing:0.251px;">Edit previous adjustment</span>
<div class="a" style="left:1144px;top:572.2px;width:218.3px;height:38.8px;border-radius:0px;border:4px solid #ee2a1e;box-sizing:border-box;"></div>
<div class="a" style="left:902px;top:619px;width:751.6px;height:56px;background:#e7eaf3;border-radius:4px;"></div>
<span class="t b" style="left:917.38px;top:639.00px;font-size:15.2px;color:#06060c;letter-spacing:0.079px;font-weight:700;">Date adjusted</span>
<svg class="a" style="left:1025.6px;top:636.7px;" width="13" height="21" viewBox="0 0 13 21" fill="none"><g fill="#a3a6b0" stroke="#a3a6b0" stroke-width="1.2" stroke-linejoin="round"><path d="M1,8.4L6.3,0.6L11.6,8.4Z"/><path d="M1,12.8L6.3,20.2L11.6,12.8Z"/></g></svg>
<span class="t b" style="left:1082.92px;top:639.00px;font-size:15.2px;color:#06060c;letter-spacing:-0.629px;font-weight:700;">Amount</span>
<span class="t b" style="left:1316.18px;top:639.00px;font-size:15.2px;color:#06060c;letter-spacing:-0.194px;font-weight:700;">Expiry</span>
<svg class="a" style="left:1370.2px;top:636.7px;" width="13" height="21" viewBox="0 0 13 21" fill="none"><g fill="#a3a6b0" stroke="#a3a6b0" stroke-width="1.2" stroke-linejoin="round"><path d="M1,8.4L6.3,0.6L11.6,8.4Z"/><path d="M1,12.8L6.3,20.2L11.6,12.8Z"/></g></svg>
<span class="t b" style="left:1576.12px;top:639.00px;font-size:15.2px;color:#06060c;letter-spacing:-0.223px;font-weight:700;">Actions</span>
<span class="t" style="left:917.93px;top:699.00px;font-size:15.4px;color:#0b0b14;letter-spacing:0.650px;">29/01/2025</span>
<div class="a" style="left:1083.4px;top:691px;width:201.2px;height:32px;background:#fff;border-radius:4px;border:1px solid #d1d3dc;box-sizing:border-box;"></div>
<span class="t" style="left:1092.03px;top:699.00px;font-size:15.4px;color:#0b0b14;letter-spacing:0.281px;">8.0</span>
<div class="a" style="left:1317.2px;top:691px;width:226.4px;height:32px;background:#fff;border-radius:4px;border:1px solid #d1d3dc;box-sizing:border-box;"></div>
<span class="t" style="left:1325.83px;top:699.00px;font-size:15.4px;color:#0b0b14;letter-spacing:1.072px;">28/02/2025</span>
<svg class="a" style="left:1520.8px;top:700.3px;" width="14" height="14" viewBox="0 0 14 14" fill="none"><g stroke="#73757c" fill="none"><rect x="0.7" y="1.6" width="12.6" height="11.8" rx="1.3" stroke-width="1.2"/><path d="M0.7,3.2H13.3" stroke-width="2.6"/><path d="M3.6,0.2V2M10.4,0.2V2" stroke-width="1.5"/></g></svg>
<svg class="a" style="left:1575px;top:701px;" width="16" height="12" viewBox="1575 701 16 12" fill="none"><path d="M1576.3,706.6L1580.7,711.2L1589.8,702.4" stroke="#7b2be0" stroke-width="1.2" stroke-linecap="round" stroke-linejoin="round"/></svg>
<svg class="a" style="left:1599.7px;top:701.7px;" width="10.6" height="10.6" viewBox="0 0 10.6 10.6" fill="none"><path d="M0.6,0.6L10.0,10.0M10.0,0.6L0.6,10.0" stroke="#e0401f" stroke-width="1.15" stroke-linecap="round"/></svg>
<div class="a" style="left:902px;top:739px;width:751.6px;height:1px;background:#d9dbe4;"></div>
<div class="a" style="left:894px;top:756px;width:767.9px;height:1px;background:#d9dbe4;"></div>
<div class="a" style="left:1573.5px;top:773px;width:80.1px;height:32px;background:#fff;border-radius:16px;border:1px solid #7a2fdb;box-sizing:border-box;"></div>
<span class="t" style="left:1594.46px;top:782.00px;font-size:14.6px;color:#7a2fdb;letter-spacing:0.366px;">Close</span>
</div></div>
<div id="frame"></div>
<div class="a" style="left:0;top:0;width:2547px;height:1px;background:#606060"></div><div class="a" style="left:0;top:0;width:1px;height:1328px;background:#828282"></div><div class="a" style="left:0;top:1325px;width:2547px;height:3px;background:#808080"></div><div class="a" style="left:2545px;top:0;width:2px;height:1328px;background:#808080"></div>
</body></html>
